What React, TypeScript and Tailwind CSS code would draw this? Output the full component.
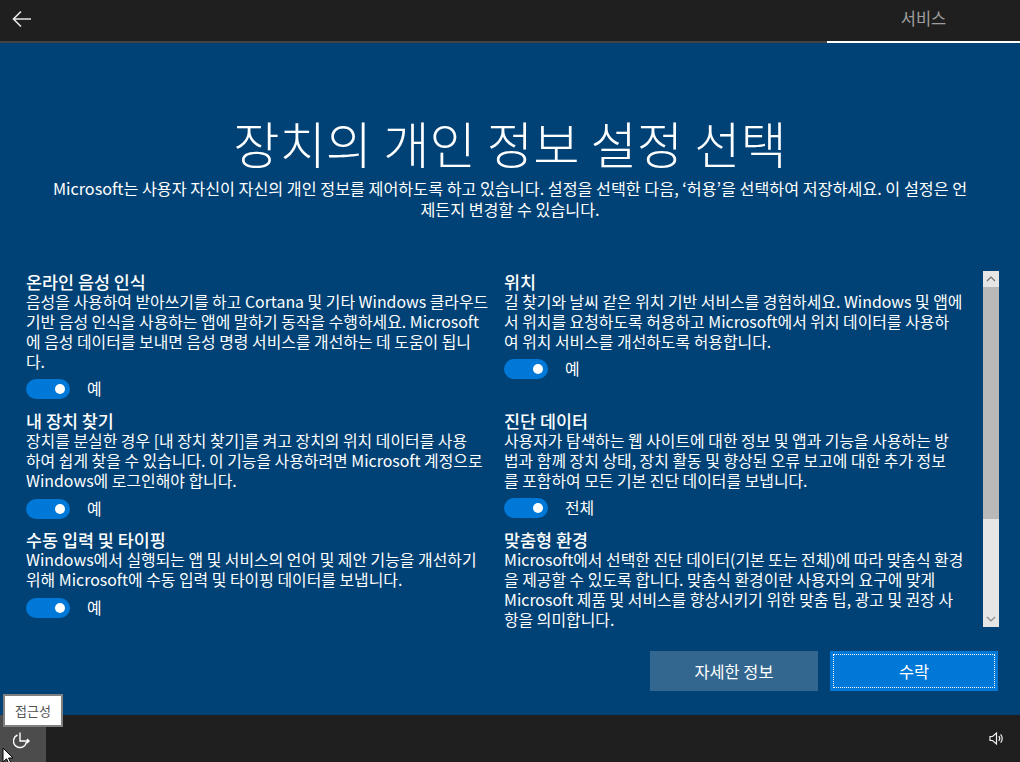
import { FC } from "react";

interface SettingProps {
  title: string;
  lines: string[];
  value?: string;
  className?: string;
  toggleGap?: string;
}

const Toggle: FC<{ value: string; gap?: string }> = ({ value, gap = "mt-[7px]" }) => (
  <div className={`flex items-center h-[20px] ${gap}`}>
    <div className="relative w-[44px] h-[20px] rounded-full bg-[#0078d7]">
      <div className="absolute right-[5px] top-[5px] w-[10px] h-[10px] rounded-full bg-white" />
    </div>
    <span className="ml-[17px] text-[15.9px] leading-[20px]">{value}</span>
  </div>
);

const Setting: FC<SettingProps> = ({ title, lines, value, className, toggleGap }) => (
  <div className={className}>
    <div className="text-[17.4px] leading-[20px] font-medium whitespace-nowrap">{title}</div>
    {lines.map((line) => (
      <div key={line} className="text-[15.9px] leading-[20px] whitespace-nowrap">
        {line}
      </div>
    ))}
    {value && <Toggle value={value} gap={toggleGap} />}
  </div>
);

export default function App() {
  return (
    <div
      className="w-[1020px] h-[762px] flex flex-col overflow-hidden bg-[#004275] text-white"
      style={{ fontFamily: '"Noto Sans CJK KR", "Noto Sans", sans-serif' }}
    >
      {/* top bar */}
      <div className="h-[43px] shrink-0 flex flex-col bg-[#1f1f1f]">
        <div className="h-[41px] flex items-center justify-between">
          <svg width="20" height="16" viewBox="0 0 20 16" className="ml-[12px] mt-[-3px]" fill="none" stroke="#e6e6e6" strokeWidth="1.6">
            <path d="M19 8H1.5M9 0.5L1.5 8l7.5 7.5" />
          </svg>
          <div className="w-[193px] text-center text-[16.5px] text-[#a0a0a0] mt-[-5px]">서비스</div>
        </div>
        <div className="h-[2px] flex bg-[#444444]">
          <div className="ml-auto w-[193px] bg-white" />
        </div>
      </div>

      {/* heading */}
      <div className="h-[228px] shrink-0 flex flex-col items-center">
        <h1 className="mt-[65px] text-[50.3px] leading-[68px] font-light whitespace-nowrap">장치의 개인 정보 설정 선택</h1>
        <p className="text-[16.2px] leading-[21px] text-center w-[930px] mt-[2px]">
          Microsoft는 사용자 자신이 자신의 개인 정보를 제어하도록 하고 있습니다. 설정을 선택한 다음, ‘허용’을 선택하여 저장하세요. 이 설정은 언
          <br />
          제든지 변경할 수 있습니다.
        </p>
      </div>

      {/* settings + scrollbar */}
      <div className="h-[356px] shrink-0 flex">
        <div className="ml-[26px] w-[478px] pt-[1px]">
          <Setting
            title="온라인 음성 인식"
            lines={[
              "음성을 사용하여 받아쓰기를 하고 Cortana 및 기타 Windows 클라우드",
              "기반 음성 인식을 사용하는 앱에 말하기 동작을 수행하세요. Microsoft",
              "에 음성 데이터를 보내면 음성 명령 서비스를 개선하는 데 도움이 됩니",
              "다.",
            ]}
            value="예"
          />
          <Setting
            className="mt-[12px]"
            title="내 장치 찾기"
            lines={[
              "장치를 분실한 경우 [내 장치 찾기]를 켜고 장치의 위치 데이터를 사용",
              "하여 쉽게 찾을 수 있습니다. 이 기능을 사용하려면 Microsoft 계정으로",
              "Windows에 로그인해야 합니다.",
            ]}
            value="예"
            toggleGap="mt-[8px]"
          />
          <Setting
            className="mt-[11px]"
            title="수동 입력 및 타이핑"
            lines={[
              "Windows에서 실행되는 앱 및 서비스의 언어 및 제안 기능을 개선하기",
              "위해 Microsoft에 수동 입력 및 타이핑 데이터를 보냅니다.",
            ]}
            value="예"
            toggleGap="mt-[8px]"
          />
        </div>
        <div className="w-[479px] pt-[1px]">
          <Setting
            title="위치"
            lines={[
              "길 찾기와 날씨 같은 위치 기반 서비스를 경험하세요. Windows 및 앱에",
              "서 위치를 요청하도록 허용하고 Microsoft에서 위치 데이터를 사용하",
              "여 위치 서비스를 개선하도록 허용합니다.",
            ]}
            value="예"
          />
          <Setting
            className="mt-[32px]"
            title="진단 데이터"
            lines={[
              "사용자가 탐색하는 웹 사이트에 대한 정보 및 앱과 기능을 사용하는 방",
              "법과 함께 장치 상태, 장치 활동 및 향상된 오류 보고에 대한 추가 정보",
              "를 포함하여 모든 기본 진단 데이터를 보냅니다.",
            ]}
            value="전체"
          />
          <Setting
            className="mt-[12px]"
            title="맞춤형 환경"
            lines={[
              "Microsoft에서 선택한 진단 데이터(기본 또는 전체)에 따라 맞춤식 환경",
              "을 제공할 수 있도록 합니다. 맞춤식 환경이란 사용자의 요구에 맞게",
              "Microsoft 제품 및 서비스를 향상시키기 위한 맞춤 팁, 광고 및 권장 사",
              "항을 의미합니다.",
            ]}
          />
        </div>
        <div className="w-[16px] flex flex-col bg-[#e6e6e6]">
          <div className="h-[16px] flex items-center justify-center">
            <svg width="10" height="6" viewBox="0 0 10 6" fill="none" stroke="#6e6e6e" strokeWidth="1.2">
              <path d="M1 5l4-4 4 4" />
            </svg>
          </div>
          <div className="h-[232px] bg-[#b9b9b9]" />
          <div className="mt-auto h-[16px] flex items-center justify-center">
            <svg width="10" height="6" viewBox="0 0 10 6" fill="none" stroke="#8a8a8a" strokeWidth="1.2">
              <path d="M1 1l4 4 4-4" />
            </svg>
          </div>
        </div>
      </div>

      {/* buttons */}
      <div className="h-[88px] shrink-0 flex justify-end gap-[12px] pt-[24px] pr-[22px]">
        <button className="w-[168px] h-[40px] bg-[#33678f] text-[16.4px]">자세한 정보</button>
        <button className="w-[168px] h-[40px] bg-[#0078d7] text-[16.4px] p-[3px]">
          <span className="flex items-center justify-center w-full h-full border border-dotted border-white">수락</span>
        </button>
      </div>

      {/* footer */}
      <div className="relative flex-1 flex items-stretch justify-between bg-[#1f1f1f]">
        <div className="w-[46px] pl-[13px] pt-[17px] bg-[#4c4c4c]">
          <svg width="18" height="18" viewBox="0 0 18 18" fill="none" stroke="#ffffff" strokeWidth="1.4">
            <path d="M4.5 3A6.5 6.5 0 1 0 13.4 10" />
            <path d="M7 0.5V9H16M14 7l2 2-2 2" />
          </svg>
        </div>
        <div className="flex items-center pr-[16px]">
          <svg width="15" height="15" viewBox="0 0 15 15" fill="none" stroke="#f0f0f0" strokeWidth="1.2">
            <path d="M1 5.5h2.5L7.5 2v11L3.5 9.5H1z" />
            <path d="M9.8 5.2a3.5 3.5 0 0 1 0 4.6M11.6 3.4a6 6 0 0 1 0 8.2" />
          </svg>
        </div>
        <div className="absolute left-[3px] top-[-21px] w-[60px] h-[33px] flex items-center justify-center bg-white border-2 border-[#808080] text-[13px] text-[#555555]">
          접근성
        </div>
        <svg width="12" height="18" viewBox="0 0 12 18" className="absolute left-[2px] top-[32px]">
          <path d="M1 1v14l3.5-3.2L7 17l2-1-2.4-5H11z" fill="#fff" stroke="#000" strokeWidth="1" />
        </svg>
      </div>
    </div>
  );
}
